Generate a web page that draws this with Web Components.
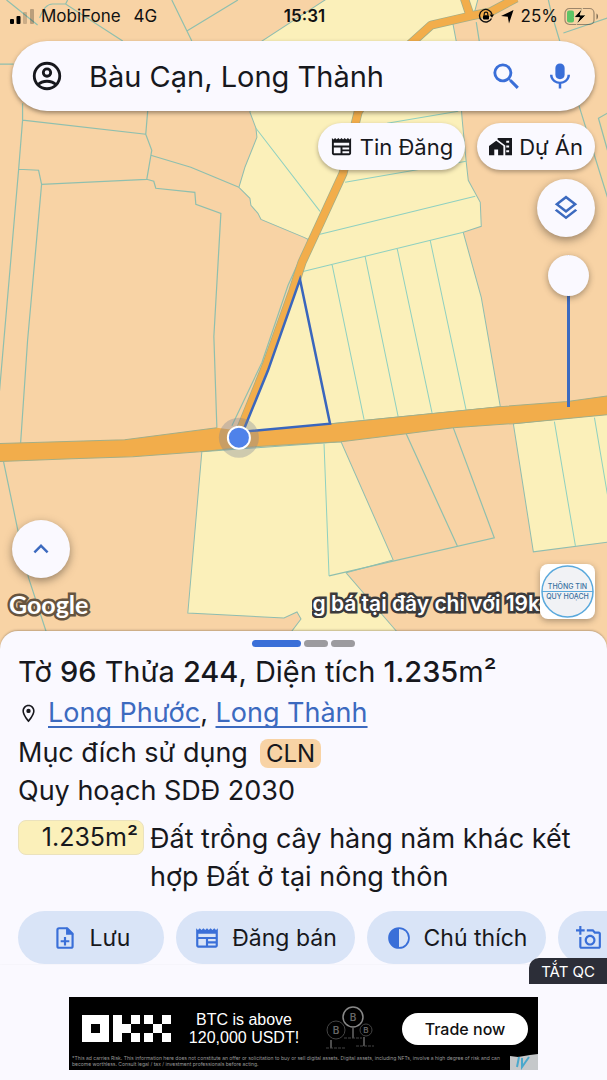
<!DOCTYPE html>
<html lang="vi">
<head>
<meta charset="utf-8">
<meta name="viewport" content="width=device-width, initial-scale=1">
<title>Bàu Cạn, Long Thành</title>
<style>
  :root {
    --surface: #faf9ff;
    --text: #17181d;
    --blue: #3a6fd8;
    --blue-dark: #3c6abf;
    --tonal: #d9e4f7;
    --land: #f8d3a5;
    --field: #fbf0ba;
    --road: #f2ad4b;
  }
  body {
    margin: 0;
    background: var(--surface);
    color: var(--text);
    font-family: Inter, Roboto, sans-serif;
  }
</style>
</head>
<body>
<map-screen></map-screen>

<script>
const icons = {
  account: `<g fill="none" stroke="currentColor" stroke-width="2"><circle cx="12" cy="12" r="9"/><circle cx="12" cy="9.6" r="2.6"/><path d="M5.6 18.2C7.3 16.5 9.500 15.700 12 15.700s4.700.8 6.400 2.500"/></g>`,
  search: `<path d="M15.500 14h-.79l-.28-.27A6.470 6.470 0 0 0 16 9.500 6.500 6.500 0 1 0 9.500 16c1.610 0 3.090-.59 4.230-1.570l.27.28v.79l5 4.990L20.490 19l-4.990-5zm-6 0C7.010 14 5 11.990 5 9.500S7.010 5 9.500 5 14 7.010 14 9.500 11.990 14 9.500 14z"/>`,
  mic: `<path d="M12 14.500c2.200 0 3.700-1.500 3.700-3.500V5.500c0-2-1.500-3.500-3.700-3.500S8.300 3.500 8.300 5.500V11c0 2 1.500 3.500 3.700 3.500z"/><path d="M18 11c0 3.300-2.700 5.500-6 5.500S6 14.300 6 11H4c0 3.800 3 6.700 7 7.200V22h2v-3.800c4-.5 7-3.400 7-7.200z"/>`,
  news: `<path d="M22 3l-1.670 1.670L18.670 3 17 4.670 15.330 3l-1.660 1.670L12 3l-1.670 1.670L8.670 3 7 4.670 5.330 3 3.670 4.670 2 3v16c0 1.100.9 2 2 2h16c1.100 0 2-.9 2-2V3zM11 19H4v-6h7v6zm9 0h-7v-2h7v2zm0-4h-7v-2h7v2zm0-4H4V8h16v3z"/>`,
  homework: `<path d="M0 11.500V21h5.500v-6h4v6H15v-9.500L7.500 6z"/><path fill-rule="evenodd" d="M9 3v2l8 6v10h7V3zm9 3h3v2h-3zm0 5h3v2h-3zm0 5h3v2h-3z"/>`,
  layers: `<path d="M12 18.540l-7.370-5.730L3 14.070l9 7 9-7-1.630-1.270zM12 16l7.360-5.730L21 9l-9-7-9 7 1.630 1.270zm0-11.470L17.740 9 12 13.470 6.260 9z"/>`,
  up: `<path d="M7.410 15.410L12 10.830l4.590 4.580L18 14l-6-6-6 6z"/>`,
  place: `<path d="M12 2C8.130 2 5 5.130 5 9c0 5.250 7 13 7 13s7-7.750 7-13c0-3.870-3.130-7-7-7zM6.800 9a5.200 5.200 0 0 1 10.400 0c0 2.880-3 7.390-5.200 10.080C9.800 16.410 6.800 11.850 6.800 9z"/><circle cx="12" cy="9" r="2.500"/>`,
  note: `<path fill="none" stroke="currentColor" stroke-width="2" d="M14 3H6.500Q5 3 5 4.500v15Q5 21 6.500 21h11q1.500 0 1.500-1.500V8z"/><path d="M13 2l7 7h-7z"/><path d="M11 11h2v3h3v2h-3v3h-2v-3H8v-2h3z"/>`,
  contrast: `<circle cx="12" cy="12" r="9.200" fill="none" stroke="currentColor" stroke-width="1.600"/><path d="M12 3v18a9 9 0 0 1 0-18z"/>`,
  photo: `<path d="M21 6h-3.170L16 4h-6v2h5.120l1.830 2H21v12H5v-9H3v9c0 1.100.9 2 2 2h16c1.100 0 2-.9 2-2V8c0-1.100-.9-2-2-2zM8 14c0 2.760 2.240 5 5 5s5-2.240 5-5-2.240-5-5-5-5 2.240-5 5zm5-3c1.650 0 3 1.350 3 3s-1.350 3-3 3-3-1.350-3-3 1.350-3 3-3zM5 6h3V4H5V1H3v3H0v2h3v3h2z"/>`
};

class AppIcon extends HTMLElement {
  connectedCallback() {
    const root = this.attachShadow({mode: "open"});
    root.innerHTML = `
      <style>
        :host { display: inline-flex; flex: none; width: var(--icon-size, 24px); height: var(--icon-size, 24px); }
        svg { width: 100%; height: 100%; fill: currentColor; }
      </style>
      <svg viewBox="0 0 24 24" aria-hidden="true">${icons[this.getAttribute("name")]}</svg>
    `;
  }
}
customElements.define("app-icon", AppIcon);

class StatusBar extends HTMLElement {
  connectedCallback() {
    const root = this.attachShadow({mode: "open"});
    root.innerHTML = `
      <style>
        :host {
          display: grid;
          grid-template-columns: 1fr auto 1fr;
          align-items: center;
          height: 32px;
          padding: 0 8px 0 10px;
          color: #111;
          font-size: 17px;
        }
        div { display: flex; align-items: center; gap: 6px; }
        .right { justify-content: flex-end; }
        .net { margin-left: 7px; }
        b { font-weight: 600; }
      </style>
      <div>
        <svg width="25" height="17" viewBox="0 0 25 17" aria-hidden="true">
          <rect x="0" y="11" width="4" height="5" rx="1"/>
          <rect x="6.500" y="8" width="4" height="8" rx="1"/>
          <rect x="13" y="4" width="4" height="12" rx="1" opacity=".18"/>
          <rect x="20" y="1" width="4" height="15" rx="1" opacity=".25"/>
        </svg>
        <span>MobiFone</span>
        <span class="net">4G</span>
      </div>
      <b>15:31</b>
      <div class="right">
        <svg width="16" height="16" viewBox="0 0 16 16" aria-hidden="true">
          <path d="M13.500 10.500A6.300 6.300 0 1 1 14 6.500" fill="none" stroke="#111" stroke-width="1.400"/>
          <path d="M11.600 6.500h4.400l-2 3.200z"/>
          <rect x="5" y="7.200" width="6" height="4.300" rx="1"/>
          <path d="M6.200 7.500V6a1.800 1.800 0 0 1 3.600 0v1.500" fill="none" stroke="#111" stroke-width="1.200"/>
        </svg>
        <svg width="15" height="15" viewBox="0 0 15 15" aria-hidden="true"><path d="M13.500 1L9 14.500 7.800 7.700 1 7z"/></svg>
        <span>25%</span>
        <svg width="35" height="19" viewBox="0 0 35 19" aria-hidden="true">
          <rect x="1" y="1.500" width="29" height="16" rx="4.500" fill="none" stroke="#111" stroke-opacity=".4" stroke-width="1.200"/>
          <rect x="3" y="3.500" width="7" height="12" rx="2" fill="#5dc466"/>
          <path d="M32.500 6.500c2 .8 2 5 0 6z" opacity=".5"/>
          <path d="M18.500 1L10 10.500h5.500L12.500 17.500 22 8h-6z" stroke="#fbe3b4" stroke-width=".8"/>
        </svg>
      </div>
    `;
  }
}
customElements.define("status-bar", StatusBar);

// Parcels, roads and the selected lot
class ParcelMap extends HTMLElement {
  connectedCallback() {
    const root = this.attachShadow({mode: "open"});
    root.innerHTML = `
      <style>
        :host { display: block; overflow: hidden; background: var(--land); }
        svg { display: block; width: 100%; height: 100%; }
        .field { fill: var(--field); stroke: #8fbdb0; }
        .lines { fill: none; stroke: #8fbfae; stroke-width: 1.200; }
        .thin { fill: none; stroke: #8fd0c0; }
        .edge { fill: none; stroke: #a3ae87; }
        .road { fill: none; stroke: var(--road); stroke-linejoin: round; }
      </style>
      <svg viewBox="0 0 607 650" preserveAspectRatio="xMidYMin slice" role="img" aria-label="Bản đồ thửa đất">
        <path class="field" d="M328-2L262 41 250 112 256 128 257 137 245 167 239 187 250 198 251 205 258 213 261 219 304 237 308 239 300 279 243 431 331 423 500 406 481 297 463 232 481 226 480 202 468 180 466 162 462 120 456 41 452 20 474 13 478-2z"/>
        <path class="field" d="M202 451L188 612 284 617 297 611 301 618 292 630V652H415L397 631 346 572 393 559 341 441z"/>
        <path class="field" d="M513 423L533 551 610 541V413z"/>

        <path class="lines" d="M7 0L38 25M40 18Q45 4 53 4L66 4 123 41M66 4L68 0M172 0L192 41M187 31L238 0M0 64H14
          M23 103V120L19 170 0 390M23 120L146 134 152 150 147 179M148 110L146 134M151 155L191 167 215 177 239 187
          M19 169L39 170 42 184 147 179 154 181 156 188 195 192 196 204 221 213 214 336 217 427
          M42 184L28 340 21 443M302 254L288 285 262 362 232 425
          M476 22L479 41M548 0L551 13 579 107 607 197M563 33L607 18M607 113L598 118 607 150
          M4 461L18 528 29 577 47 632M406 433L457 545M453 427L494 537 329 575"/>
        <path class="thin" d="M256 128L320 211M387 123L458 111M345 182L466 161M320 234L475 196M303 271L463 232
          M332 264L364 419M365 256L398 416M397 248L432 413M430 240L466 410M324 443L329 575M554 421L575 545M594 417L607 494"/>

        <g class="road">
          <path stroke="#a3ae87" stroke-width="9" d="M470 16L464-2M516-2L490 12 470 16 431 25 390 62 358 112 343 173 320 223 302 262 293 290 267 363 240 430"/>
          <path stroke-width="7.500" d="M470 16L464-2M516-2L490 12 470 16 431 25 390 62 358 112 343 173 320 223 302 262 293 290 267 363 240 430"/>
        </g>
        <path fill="#f2ad4b" d="M-2 443L125 439 217 427 240 430 331 423 500 406 567 401 609 395V414L513 423 453 427 406 433 341 441 304 443 240 447 200 451 133 456 72 458-2 461z"/>
        <path class="edge" d="M-2 443L125 439 217 427M331 423L500 406 567 401 609 395M609 414L513 423 453 427 406 433 341 441 304 443 240 447 200 451 133 456 72 458-2 461"/>

        <path d="M300 279L330 423 243 431 268 370z" fill="#fbf0ba" stroke="#3a66bd" stroke-width="2.500"/>
        <circle cx="239" cy="437" r="20" fill="#7b8398" opacity=".35"/>
        <circle cx="239" cy="437" r="11" fill="#4f82ea" stroke="#fff" stroke-width="2"/>
      </svg>
    `;
  }
}
customElements.define("parcel-map", ParcelMap);

class SearchBar extends HTMLElement {
  connectedCallback() {
    const root = this.attachShadow({mode: "open"});
    root.innerHTML = `
      <style>
        :host {
          display: flex;
          align-items: center;
          height: 70px;
          margin: 9px 12px 0;
          padding: 0 18px;
          box-sizing: border-box;
          border-radius: 35px;
          background: var(--surface);
          box-shadow: 0 2px 4px rgba(60, 50, 40, .5);
          --icon-size: 34px;
        }
        button { display: flex; padding: 0; border: 0; background: none; color: inherit; }
        .action { color: var(--blue); --icon-size: 35px; margin-left: 18px; }
        .mic { --icon-size: 30px; margin: 0 2px 0 21px; }
        input {
          flex: 1;
          min-width: 0;
          margin-left: 25px;
          padding: 0;
          border: 0;
          outline: 0;
          background: none;
          color: inherit;
          font: inherit;
          font-size: 29px;
        }
      </style>
      <button aria-label="Tài khoản"><app-icon name="account"></app-icon></button>
      <input type="text" aria-label="Tìm kiếm" value="${this.getAttribute("value")}">
      <button class="action" aria-label="Tìm"><app-icon name="search"></app-icon></button>
      <button class="action mic" aria-label="Giọng nói"><app-icon name="mic"></app-icon></button>
    `;
  }
}
customElements.define("search-bar", SearchBar);

class MapChip extends HTMLElement {
  connectedCallback() {
    const root = this.attachShadow({mode: "open"});
    root.innerHTML = `
      <style>
        :host { display: block; --icon-size: 23px; }
        button {
          display: flex;
          align-items: center;
          gap: 7px;
          height: 47px;
          padding: 0 12px;
          border: 0;
          border-radius: 24px;
          background: var(--surface);
          color: inherit;
          font: inherit;
          font-size: 22px;
          box-shadow: 0 2px 4px rgba(60, 50, 40, .4);
        }
      </style>
      <button><app-icon name="${this.getAttribute("icon")}"></app-icon><slot></slot></button>
    `;
  }
}
customElements.define("map-chip", MapChip);

class RoundButton extends HTMLElement {
  connectedCallback() {
    const root = this.attachShadow({mode: "open"});
    root.innerHTML = `
      <style>
        :host { display: block; --icon-size: 30px; }
        button {
          display: grid;
          place-items: center;
          width: 58px;
          height: 58px;
          padding: 0;
          border: 0;
          border-radius: 50%;
          background: var(--surface);
          color: var(--blue-dark);
          box-shadow: 0 3px 8px rgba(60, 50, 40, .5);
        }
      </style>
      <button aria-label="${this.getAttribute("label")}"><app-icon name="${this.getAttribute("icon")}"></app-icon></button>
    `;
  }
}
customElements.define("round-button", RoundButton);

class OpacitySlider extends HTMLElement {
  connectedCallback() {
    const root = this.attachShadow({mode: "open"});
    root.innerHTML = `
      <style>
        :host { display: block; }
        input {
          display: block;
          appearance: none;
          writing-mode: vertical-lr;
          direction: rtl;
          width: 41px;
          height: 152px;
          margin: 0;
          background: linear-gradient(var(--blue-dark), var(--blue-dark)) center / 3px 100% no-repeat;
        }
        input::-webkit-slider-thumb {
          appearance: none;
          width: 41px;
          height: 41px;
          border-radius: 50%;
          background: var(--surface);
          box-shadow: 0 2px 6px rgba(60, 50, 40, .45);
        }
      </style>
      <input type="range" min="0" max="100" value="100" aria-label="Độ mờ">
    `;
  }
}
customElements.define("opacity-slider", OpacitySlider);

class MapFooter extends HTMLElement {
  connectedCallback() {
    const root = this.attachShadow({mode: "open"});
    root.innerHTML = `
      <style>
        :host { display: flex; justify-content: space-between; align-items: flex-end; padding: 0 12px 0 9px; }
        .google, .marquee { color: #fff; paint-order: stroke fill; white-space: nowrap; }
        .google {
          font: 700 25px/30px Lato, sans-serif;
          -webkit-text-stroke: 5px #66543f;
          padding-bottom: 12px;
        }
        .right { display: flex; align-items: flex-end; }
        .marquee {
          margin-bottom: 13px;
          overflow: hidden;
          font-size: 21px;
          line-height: 28px;
          font-weight: 600;
          -webkit-text-stroke: 5px #3b3a3b;
        }
        .brand {
          display: block;
          width: 55px;
          height: 55px;
          margin-bottom: 12px;
          border-radius: 8px;
          background: #fff;
          box-shadow: 0 2px 6px rgba(60, 50, 40, .4);
        }
        svg { display: block; }
      </style>
      <span class="google">Google</span>
      <div class="right">
        <span class="marquee">g bá tại đây chỉ với 19k</span>
        <a class="brand" href="#" aria-label="Thông tin quy hoạch">
          <svg viewBox="0 0 55 55" font-size="7" font-weight="500" text-anchor="middle" fill="#37709f">
            <circle cx="27.500" cy="27.500" r="25.500" fill="#f1f2f5" stroke="#5aa9dc" stroke-width="1.500"/>
            <path d="M2 27.500h51" stroke="#5aa9dc"/>
            <text x="27.500" y="25">THÔNG TIN</text>
            <text x="27.500" y="35">QUY HOẠCH</text>
          </svg>
        </a>
      </div>
    `;
  }
}
customElements.define("map-footer", MapFooter);

class ActionButton extends HTMLElement {
  connectedCallback() {
    const root = this.attachShadow({mode: "open"});
    root.innerHTML = `
      <style>
        :host { display: block; flex: none; --icon-size: 26px; }
        button {
          display: flex;
          align-items: center;
          justify-content: center;
          gap: 12px;
          min-width: 146px;
          height: 53px;
          padding: 0 18px;
          border: 0;
          border-radius: 27px;
          background: var(--tonal);
          color: inherit;
          font: inherit;
          font-size: 23px;
          white-space: nowrap;
        }
        :host([wide]) button { min-width: 179px; }
        :host([start]) button { justify-content: flex-start; }
        app-icon { color: var(--blue); }
      </style>
      <button aria-label="${this.getAttribute("label")}"><app-icon name="${this.getAttribute("icon")}"></app-icon><slot></slot></button>
    `;
  }
}
customElements.define("action-button", ActionButton);

class ParcelSheet extends HTMLElement {
  connectedCallback() {
    const root = this.attachShadow({mode: "open"});
    root.innerHTML = `
      <style>
        :host {
          display: block;
          position: relative;
          margin-top: -20px;
          border-radius: 18px 18px 0 0;
          background: var(--surface);
          box-shadow: 0 -1px 2px rgba(60, 50, 40, .3);
          font-size: 27px;
          line-height: 38px;
        }
        .handle { display: flex; justify-content: center; gap: 3px; padding: 9px 0 6px; }
        .handle i { width: 24px; height: 7px; border-radius: 4px; background: #9c9b9f; }
        .handle .on { width: 49px; background: var(--blue); }
        .info { padding: 0 18px; }
        h1 { margin: 0; font-size: 29px; font-weight: 400; line-height: 38px; }
        b { font-weight: 500; }
        p { display: flex; align-items: center; margin: 0; }
        .place { margin: 3px 0 2px; --icon-size: 21px; }
        .place span { margin-left: 9px; }
        a { color: var(--blue-dark); text-underline-offset: 4px; text-decoration-thickness: 2px; text-decoration-skip-ink: none; }
        .tag {
          margin-left: 12px;
          padding: 0 6px;
          border-radius: 8px;
          background: var(--land);
          font-size: 24px;
          line-height: 29px;
        }
        .plan { display: grid; grid-template-columns: 126px 1fr; gap: 6px; margin-top: 10px; }
        .area {
          align-self: start;
          border: 1px solid #ebe2bd;
          border-radius: 8px;
          padding-right: 5px;
          background: var(--field);
          font-size: 25px;
          line-height: 33px;
          text-align: right;
        }
        .actions { display: flex; gap: 12px; padding: 15px 0 0 18px; overflow: hidden; }
      </style>
      <div class="handle"><i class="on"></i><i></i><i></i></div>
      <section class="info">
        <h1>Tờ <b>96</b> Thửa <b>244</b>, Diện tích <b>1.235</b>m²</h1>
        <p class="place"><app-icon name="place"></app-icon><span><a href="#">Long Phước</a>, <a href="#">Long Thành</a></span></p>
        <p>Mục đích sử dụng <span class="tag">CLN</span></p>
        <p>Quy hoạch SDĐ 2030</p>
        <div class="plan">
          <span class="area">1.235m²</span>
          <span>Đất trồng cây hàng năm khác kết hợp Đất ở tại nông thôn</span>
        </div>
      </section>
      <div class="actions">
        <action-button icon="note" label="Lưu">Lưu</action-button>
        <action-button icon="news" label="Đăng bán" wide>Đăng bán</action-button>
        <action-button icon="contrast" label="Chú thích" wide>Chú thích</action-button>
        <action-button icon="photo" label="Chụp ảnh" start></action-button>
      </div>
    `;
  }
}
customElements.define("parcel-sheet", ParcelSheet);

class AdBanner extends HTMLElement {
  connectedCallback() {
    const root = this.attachShadow({mode: "open"});
    root.innerHTML = `
      <style>
        :host { display: flex; flex-direction: column; align-items: center; position: relative; margin-top: -6px; padding-bottom: 10px; }
        .close {
          align-self: flex-end;
          height: 26px;
          margin-bottom: 13px;
          padding: 0 12px;
          border: 0;
          border-radius: 10px 0 0 0;
          background: #2c2e38;
          color: #fff;
          font: inherit;
          font-size: 15px;
        }
        .ad {
          display: grid;
          grid-template-columns: 90px 144px 68px 1fr;
          align-items: center;
          justify-items: center;
          position: relative;
          box-sizing: border-box;
          width: 469px;
          max-width: 100%;
          height: 73px;
          padding: 8px 10px 0 13px;
          overflow: hidden;
          background: #000;
          color: #fff;
          text-decoration: none;
        }
        strong { font-size: 16px; line-height: 18px; font-weight: 500; font-family: "Liberation Sans", Arial, sans-serif; text-align: center; white-space: nowrap; }
        .cta { justify-self: end; width: 126px; border-radius: 16px; background: #fff; color: #111; font-size: 16px; font-weight: 500; line-height: 32px; text-align: center; }
        small { grid-column: 1 / -1; align-self: end; margin: 0 14px 0 -10px; padding-bottom: 3px; font-size: 5px; line-height: 6px; color: #999; }
        svg { display: block; fill: #fff; }
        .corner { position: absolute; right: 0; bottom: 0; }
      </style>
      <button class="close">TẮT QC</button>
      <a class="ad" href="#">
        <svg width="90" height="27" viewBox="0 0 90 27" role="img" aria-label="OKX">
          <path fill-rule="evenodd" d="M0 0h27v27H0zM9 9v9h9V9zM31 0h9v9h9v9h-9v9h-9zM49 0h9v9h-9zM49 18h9v9h-9zM62 0h9v9h-9zM80 0h9v9h-9zM71 9h9v9h-9zM62 18h9v9h-9zM80 18h9v9h-9z"/>
        </svg>
        <strong>BTC is above<br>120,000 USDT!</strong>
        <svg width="50" height="45" viewBox="0 0 50 45" aria-hidden="true" font-size="10" font-weight="600" text-anchor="middle">
          <g fill="none" stroke="#444"><circle cx="11" cy="24" r="9"/><circle cx="28" cy="11" r="10" stroke="#888" stroke-width="1.500"/><circle cx="41" cy="24" r="6"/></g>
          <path d="M28 22v10M6 34v8M39 31v9" stroke="#999"/>
          <path d="M19 32h18M1 42h20M31 40h18" stroke="#444" stroke-dasharray="3 1"/>
          <g fill="#666"><text x="11" y="28">B</text><text x="28" y="15">B</text><text x="41" y="27" font-size="8">B</text></g>
        </svg>
        <span class="cta">Trade now</span>
        <small>*This ad carries Risk. This information here does not constitute an offer or solicitation to buy or sell digital assets. Digital assets, including NFTs, involve a high degree of risk and can become worthless. Consult legal / tax / investment professionals before acting.</small>
        <svg class="corner" width="28" height="16" viewBox="0 0 28 16" aria-hidden="true">
          <path fill="#c5c8ca" d="M0 2L8 3 20 1 28 0V16H0z"/>
          <path fill="none" stroke="#4aa8cc" stroke-width="2" d="M9 3L7 13M12 4V13L19 3"/>
        </svg>
      </a>
    `;
  }
}
customElements.define("ad-banner", AdBanner);

class MapScreen extends HTMLElement {
  connectedCallback() {
    const root = this.attachShadow({mode: "open"});
    root.innerHTML = `
      <style>
        :host { display: flex; flex-direction: column; min-height: 100vh; overflow: hidden; }
        main { flex: 1; display: grid; }
        main > * { grid-area: 1 / 1; min-width: 0; }
        parcel-map { min-height: 100%; height: 0; }
        .over { position: relative; display: flex; flex-direction: column; padding-bottom: 20px; }
        .chips { display: flex; justify-content: flex-end; gap: 12px; padding: 12px 12px 0; }
        .tools { display: flex; flex-direction: column; align-items: flex-end; gap: 18px; padding: 9px 12px 0; }
        opacity-slider { margin-right: 6px; }
        .expand { margin: auto 12px 0; padding-top: 24px; }
        map-footer { margin-top: -14px; }
      </style>
      <main>
        <parcel-map></parcel-map>
        <div class="over">
          <status-bar></status-bar>
          <search-bar value="Bàu Cạn, Long Thành"></search-bar>
          <div class="chips">
            <map-chip icon="news">Tin Đăng</map-chip>
            <map-chip icon="homework">Dự Án</map-chip>
          </div>
          <div class="tools">
            <round-button icon="layers" label="Lớp bản đồ"></round-button>
            <opacity-slider></opacity-slider>
          </div>
          <round-button class="expand" icon="up" label="Mở rộng"></round-button>
          <map-footer></map-footer>
        </div>
      </main>
      <parcel-sheet></parcel-sheet>
      <ad-banner></ad-banner>
    `;
  }
}
customElements.define("map-screen", MapScreen);
</script>
</body>
</html>
